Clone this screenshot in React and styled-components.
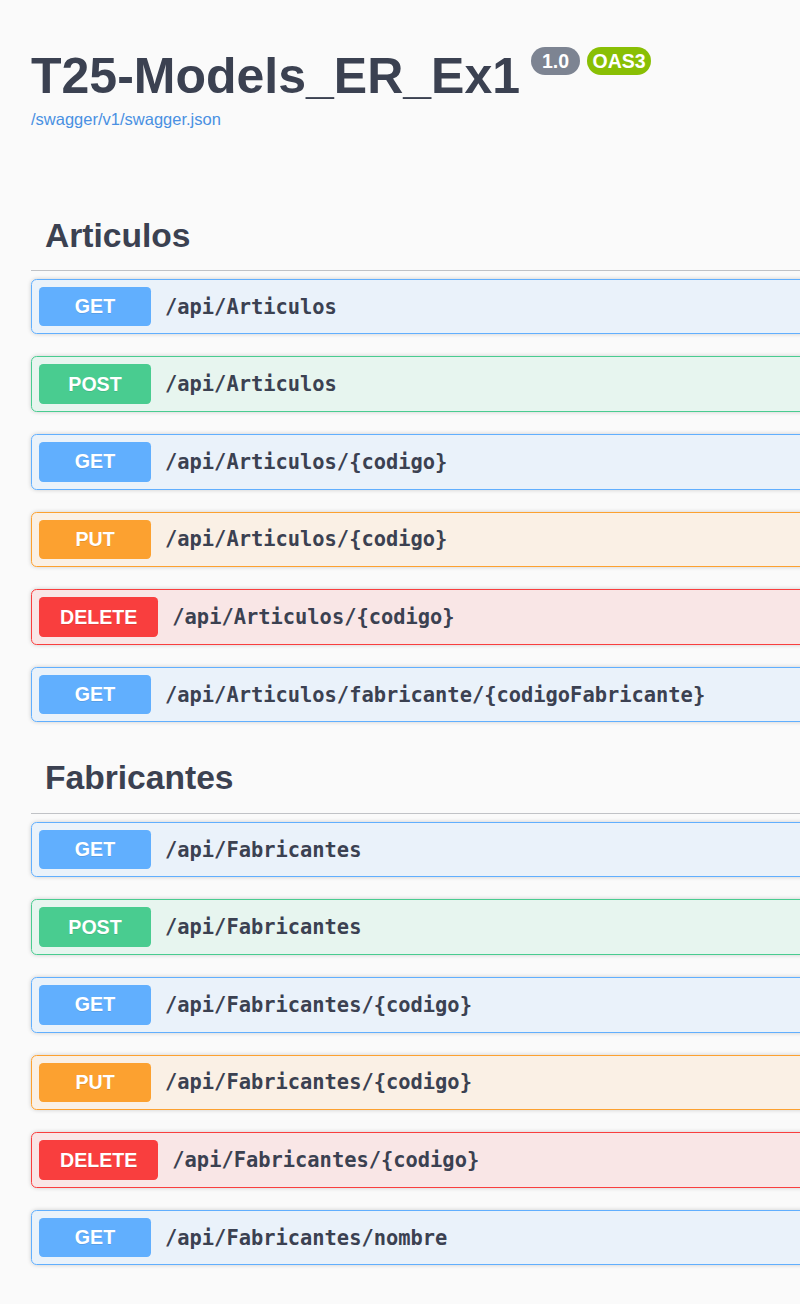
import styled, { createGlobalStyle } from "styled-components"

const GlobalStyle = createGlobalStyle`
  html, body {
    margin: 0;
    padding: 0;
    background: #fafafa;
    overflow: hidden;
  }
  body {
    font-family: "Liberation Sans", Arial, sans-serif;
    color: #3b4151;
  }
`

const methodColors = {
  GET: "97, 175, 254",
  POST: "73, 204, 144",
  PUT: "252, 161, 48",
  DELETE: "249, 62, 62",
}

const Page = styled.div`
  width: 1300px;
  min-height: 1304px;
  padding: 46.5px 0 40px 31px;
  box-sizing: border-box;
`

const Info = styled.div`
  margin-bottom: 73px;
`

const TitleRow = styled.div`
  display: flex;
  align-items: flex-start;
`

const Title = styled.h1`
  margin: 0;
  font-size: 50px;
  line-height: 58px;
  font-weight: 700;
  color: #3b4151;
`

const Badges = styled.div`
  display: flex;
  gap: 7px;
  margin: 0.5px 0 0 11px;
`

const Badge = styled.span`
  display: inline-flex;
  align-items: center;
  height: 28px;
  padding: 0 5.5px;
  border-radius: 14px;
  background: ${(p) => p.$bg};
  color: #fff;
  font-family: "Liberation Sans", Arial, sans-serif;
  font-size: 19.5px;
  font-weight: 700;
  white-space: pre;
`

const SpecLink = styled.a`
  display: block;
  margin-top: 5px;
  font-size: 16.5px;
  line-height: 19px;
  color: #4990e2;
  text-decoration: none;
`

const Section = styled.section``

const TagHeader = styled.h3`
  margin: 0 0 8px;
  padding: 14px 28px 14.4px 14px;
  font-size: 33.6px;
  line-height: 40px;
  font-weight: 700;
  color: #3b4151;
  border-bottom: 1px solid rgba(59, 65, 81, 0.3);
`

const Operation = styled.div`
  display: flex;
  align-items: center;
  height: 55.6px;
  box-sizing: border-box;
  padding: 0 7px;
  margin-bottom: 22px;
  border: 1px solid rgb(${(p) => methodColors[p.$method]});
  border-radius: 5.6px;
  background: rgba(${(p) => methodColors[p.$method]}, 0.1);
  box-shadow: 0 0 4px rgba(0, 0, 0, 0.19);
`

const Method = styled.span`
  display: flex;
  align-items: center;
  justify-content: center;
  box-sizing: border-box;
  min-width: 112px;
  height: 39.6px;
  padding: 0 21px;
  border-radius: 4.2px;
  background: rgb(${(p) => methodColors[p.$method]});
  color: #fff;
  font-size: 19.6px;
  font-weight: 700;
  text-shadow: 0 1px 0 rgba(0, 0, 0, 0.1);
`

const Path = styled.span`
  padding: 0 14px;
  font-family: "DejaVu Sans Mono", "Liberation Mono", monospace;
  font-size: 20.4px;
  font-weight: 700;
  color: #3b4151;
`

const tags = [
  {
    name: "Articulos",
    ops: [
      ["GET", "/api/Articulos"],
      ["POST", "/api/Articulos"],
      ["GET", "/api/Articulos/{codigo}"],
      ["PUT", "/api/Articulos/{codigo}"],
      ["DELETE", "/api/Articulos/{codigo}"],
      ["GET", "/api/Articulos/fabricante/{codigoFabricante}"],
    ],
  },
  {
    name: "Fabricantes",
    ops: [
      ["GET", "/api/Fabricantes"],
      ["POST", "/api/Fabricantes"],
      ["GET", "/api/Fabricantes/{codigo}"],
      ["PUT", "/api/Fabricantes/{codigo}"],
      ["DELETE", "/api/Fabricantes/{codigo}"],
      ["GET", "/api/Fabricantes/nombre"],
    ],
  },
]

const App = () => {
  return (
    <Page>
      <GlobalStyle />
      <Info>
        <TitleRow>
          <Title>T25-Models_ER_Ex1</Title>
          <Badges>
            <Badge $bg="#7d8492"> 1.0 </Badge>
            <Badge $bg="#89bf04">OAS3</Badge>
          </Badges>
        </TitleRow>
        <SpecLink href="#">/swagger/v1/swagger.json</SpecLink>
      </Info>
      {tags.map((tag) => (
        <Section key={tag.name}>
          <TagHeader>{tag.name}</TagHeader>
          {tag.ops.map(([method, path], i) => (
            <Operation key={i} $method={method}>
              <Method $method={method}>{method}</Method>
              <Path>{path}</Path>
            </Operation>
          ))}
        </Section>
      ))}
    </Page>
  )
}

export default App
